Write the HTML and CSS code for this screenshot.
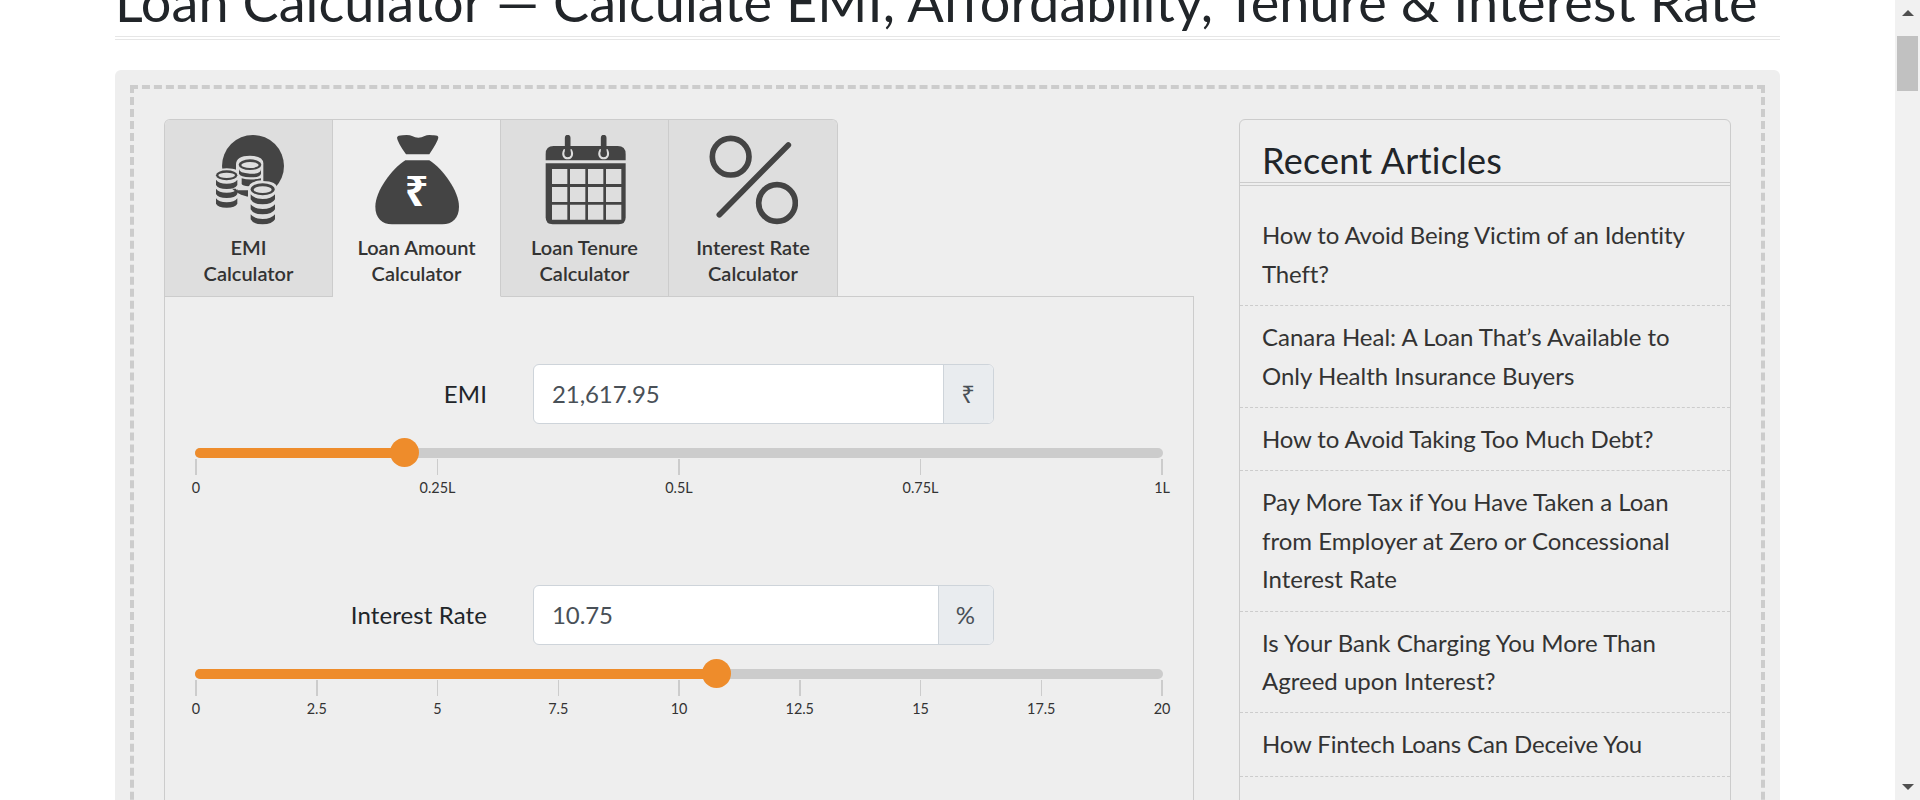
FILE: index.html
```html
<!DOCTYPE html>
<html lang="en">
<head>
<meta charset="utf-8">
<title>Loan Calculator</title>
<link rel="stylesheet" href="styles.css">
</head>
<body>
<div class="viewport">
  <main class="page">
    <h1 class="title"><span class="title-text">Loan Calculator — Calculate EMI, Affordability, Tenure &amp; Interest Rate</span></h1>
    <div class="panel">
      <div class="frame">
        <section class="calculator">
          <nav class="tabs">
            <a class="tab">
              <svg class="tab-icon" viewBox="2 0 270 270">
                <circle cx="149" cy="93" r="93" fill="#444"/>
                <g fill="#dedede">
                  <path d="M98 88q0-26 42-26t40 26v78H98z"/>
                  <path d="M30 121q0-21 40-21t40 21v40H30z"/>
                  <path d="M134 163q0-25 44-25t44 25v60h-88z"/>
                </g>
                <g fill="#444">
                  <path d="M107 102q0 12 33 14t33-14v14q-4 12-33 11t-33-11z"/>
                  <path d="M115 130q25 7 58 0v6q-24 2-33 12-2 6-5 6-16-1-20-7z"/>
                  <ellipse cx="140" cy="89" rx="34" ry="16"/>
                  <ellipse cx="70" cy="121" rx="32" ry="15"/>
                  <path d="M38 134q8 12 32 12t32-12v16q-6 12-32 12t-32-12z"/>
                  <path d="M38 161q8 12 32 12t32-12v16q-6 12-32 12t-32-12z"/>
                  <path d="M38 190q8 12 32 12t32-12v16q-6 12-32 12t-32-12z"/>
                  <ellipse cx="178" cy="163" rx="36" ry="18"/>
                  <path d="M142 178q10 14 36 14t37-14v15q-8 15-37 15t-36-15z"/>
                  <path d="M142 208q10 14 36 14t37-14v15q-8 15-37 15t-36-15z"/>
                  <path d="M142 238q10 14 36 14t37-14v15q-8 15-37 15t-36-15z"/>
                </g>
                <g fill="#dedede">
                  <ellipse cx="140" cy="90" rx="26" ry="9"/>
                  <ellipse cx="70" cy="121" rx="25" ry="8"/>
                  <ellipse cx="178" cy="164" rx="27" ry="10"/>
                </g>
              </svg>
              <span>EMI<br>Calculator</span>
            </a>
            <a class="tab tab-active">
              <svg class="tab-icon" viewBox="1 0 270 270">
                <path d="M76 8q2-7 17-7 20-2 28 2 19 10 38 0 8-4 24-2 17-1 17 7-1 10-27 50H103Q77 21 76 8z" fill="#444"/>
                <path d="M101 76h72c40 25 89 92 89 139 0 34-20 53-50 53H61c-30 0-50-19-50-53 0-47 50-114 90-139z" fill="#444"/>
                <text class="bag-sign" x="135" y="214" text-anchor="middle">₹</text>
              </svg>
              <span>Loan Amount<br>Calculator</span>
            </a>
            <a class="tab">
              <svg class="tab-icon" viewBox="-2 0 270 270">
                <path d="M15 76V57q0-24 24-24h192q24 0 24 24v19z" fill="#444"/>
                <path d="M15 85h240v162q0 21-21 21H36q-21 0-21-21z" fill="#444"/>
                <g fill="#dedede">
                  <path d="M34 102h46v45H34zM88 102h46v45H88zM142 102h46v45h-46zM196 102h46v45h-46zM34 156h46v45H34zM88 156h46v45H88zM142 156h46v45h-46zM196 156h46v45h-46zM34 209h46v45H34zM88 209h46v45H88zM142 209h46v45h-46zM196 209h46v45h-46z"/>
                </g>
                <g fill="none" stroke-linecap="round">
                  <path d="M71 45c-8 15 0 25 10 25s18-10 10-25M179 45c-8 15 0 25 10 25s18-10 10-25" stroke="#dedede" stroke-width="6"/>
                  <path d="M81 8v49M189 8v49" stroke="#444" stroke-width="17"/>
                </g>
              </svg>
              <span>Loan Tenure<br>Calculator</span>
            </a>
            <a class="tab">
              <svg class="tab-icon" viewBox="-2 0 270 270">
                <g fill="none" stroke="#444" stroke-width="17" stroke-linecap="round">
                  <circle cx="66" cy="65" r="55"/>
                  <circle cx="205" cy="204" r="55"/>
                  <path d="M239 30L32 239"/>
                </g>
              </svg>
              <span>Interest Rate<br>Calculator</span>
            </a>
          </nav>
          <form class="form">
            <div class="field">
              <div class="field-row">
                <label class="field-label">EMI</label>
                <div class="input-group">
                  <span class="input">21,617.95</span>
                  <span class="addon addon-rupee">₹</span>
                </div>
              </div>
              <div class="track">
                <div class="fill" style="width:21.6%"></div>
                <div class="handle" style="left:21.6%"></div>
              </div>
              <div class="scale">
                <span class="tick">0</span><span class="tick">0.25L</span><span class="tick">0.5L</span><span class="tick">0.75L</span><span class="tick">1L</span>
              </div>
            </div>
            <div class="field">
              <div class="field-row">
                <label class="field-label">Interest Rate</label>
                <div class="input-group">
                  <span class="input">10.75</span>
                  <span class="addon">%</span>
                </div>
              </div>
              <div class="track">
                <div class="fill" style="width:53.85%"></div>
                <div class="handle" style="left:53.85%"></div>
              </div>
              <div class="scale">
                <span class="tick">0</span><span class="tick">2.5</span><span class="tick">5</span><span class="tick">7.5</span><span class="tick">10</span><span class="tick">12.5</span><span class="tick">15</span><span class="tick">17.5</span><span class="tick">20</span>
              </div>
            </div>
          </form>
        </section>
        <aside class="articles">
          <h2 class="articles-title">Recent Articles</h2>
          <ul class="article-list">
            <li class="article article-tight">How to Avoid Being Victim of an Identity Theft?</li>
            <li class="article">Canara Heal: A Loan That’s Available to Only Health Insurance Buyers</li>
            <li class="article article-tight">How to Avoid Taking Too Much Debt?</li>
            <li class="article">Pay More Tax if You Have Taken a Loan from Employer at Zero or Concessional Interest Rate</li>
            <li class="article">Is Your Bank Charging You More Than Agreed upon Interest?</li>
            <li class="article article-tight">How Fintech Loans Can Deceive You</li>
          </ul>
        </aside>
      </div>
    </div>
  </main>
  <div class="scrollbar">
    <svg class="arrow" viewBox="0 0 12 6"><path d="M6 0l6 6H0z" fill="#505050"/></svg>
    <div class="thumb"></div>
    <svg class="arrow arrow-down" viewBox="0 0 12 6"><path d="M0 0h12L6 6z" fill="#505050"/></svg>
  </div>
</div>
</body>
</html>
```
FILE: styles.css
```css
* { box-sizing: border-box; }
body {
  margin: 0;
  font-family: Lato, "Noto Sans", sans-serif;
  font-size: 24px;
  font-variant-ligatures: none;
  color: #212529;
  background: #fff;
  overflow: hidden;
}
.viewport {
  display: grid;
  grid-template-columns: 1fr 25px;
  height: 800px;
  overflow: hidden;
}
.page {
  padding: 0 115px;
  height: 800px;
  overflow: hidden;
}
.title {
  display: flex;
  align-items: flex-end;
  height: 40px;
  margin: 0 0 30px;
  border-bottom: 4px double #e6e6e6;
  font-size: 54px;
  font-weight: 400;
  letter-spacing: 0.07px;
  line-height: 68px;
  white-space: nowrap;
}
.title-text { display: block; }
.panel {
  height: 1200px;
  padding: 15px;
  background: #eee;
  border-radius: 6px;
}
.frame {
  display: flex;
  justify-content: space-between;
  height: 1170px;
  padding: 30px;
  border: 4px dashed #ccc;
}
.calculator {
  display: flex;
  flex-direction: column;
  width: 1030px;
}
.tabs {
  display: flex;
  width: 674px;
  height: 178px;
  margin-bottom: -1px;
  border: 1px solid #ccc;
  border-bottom: 0;
  border-radius: 6px 6px 0 0;
  overflow: hidden;
  z-index: 1;
}
.tab {
  display: flex;
  flex: none;
  width: 168px;
  flex-direction: column;
  align-items: center;
  gap: 9px;
  padding-top: 15px;
  background: #dedede;
  border-right: 1px solid #ccc;
  border-bottom: 1px solid #ccc;
  color: #333;
  font-size: 20px;
  font-weight: 600;
  line-height: 26px;
  text-align: center;
}
.tab:last-child { border-right: 0; }
.tab-active {
  background: #eee;
  border-bottom-color: #eee;
}
.tab-icon {
  display: block;
  width: 90px;
  height: 90px;
}
.bag-sign {
  font-family: "Noto Sans", sans-serif;
  font-size: 124px;
  font-weight: 700;
  fill: #fff;
}
.form {
  flex: 1;
  padding: 67px 31px 0 30px;
  border: 1px solid #ccc;
}
.field { height: 221.4px; }
.field-row {
  display: flex;
  justify-content: flex-end;
  gap: 46px;
  width: 799px;
}
.field-label {
  padding-top: 15px;
  letter-spacing: 0.1px;
  line-height: 29px;
}
.input-group {
  display: flex;
  width: 461px;
  height: 59.5px;
  border: 1px solid #ced4da;
  border-radius: 6px;
  overflow: hidden;
  background: #fff;
  color: #495057;
  line-height: 58px;
}
.input { flex: 1; padding-left: 18px; letter-spacing: -0.1px; }
.addon {
  padding: 0 18px 0 17px;
  background: #e9ecef;
  border-left: 1px solid #ced4da;
}
.addon-rupee { font-family: "Noto Sans", sans-serif; }
.track {
  position: relative;
  width: 968px;
  height: 10.5px;
  margin-top: 24px;
  border-radius: 6px;
  background: #ccc;
}
.fill {
  height: 100%;
  border-radius: 6px;
  background: #ee8c2b;
}
.handle {
  position: absolute;
  top: -10px;
  width: 29px;
  height: 29px;
  margin-left: -14px;
  border-radius: 50%;
  background: #ee8c2b;
}
.scale {
  display: flex;
  justify-content: space-between;
  width: 967px;
  padding: 1px 0 0 1px;
}
.tick {
  display: flex;
  flex-direction: column;
  align-items: center;
  width: 0;
  color: #333;
  font-size: 14.4px;
  line-height: 18px;
  white-space: nowrap;
}
.tick::before {
  content: "";
  flex: none;
  width: 1.5px;
  height: 16px;
  margin-bottom: 4px;
  background: #ccc;
}
.articles {
  width: 492px;
  border: 1px solid #ccc;
  border-radius: 6px 6px 0 0;
}
.articles-title {
  margin: 0 0 18.4px;
  padding: 18.5px 22px 0;
  height: 66px;
  border-bottom: 4px double #ccc;
  font-size: 36px;
  font-weight: 400;
  letter-spacing: 0.25px;
  line-height: 43px;
}
.article-list {
  margin: 0;
  padding: 0;
  list-style: none;
}
.article {
  padding: 12px 22px;
  border-bottom: 1px dashed #ccc;
  color: #333;
  line-height: 38.4px;
}
.article-tight { letter-spacing: -0.14px; }
.scrollbar {
  display: flex;
  flex-direction: column;
  align-items: center;
  padding: 10px 0;
  background: #f1f1f1;
}
.arrow { display: block; width: 12px; height: 6px; }
.thumb {
  width: 21px;
  height: 55px;
  margin-top: 20px;
  background: #c1c1c1;
}
.arrow-down { margin-top: auto; }
```
